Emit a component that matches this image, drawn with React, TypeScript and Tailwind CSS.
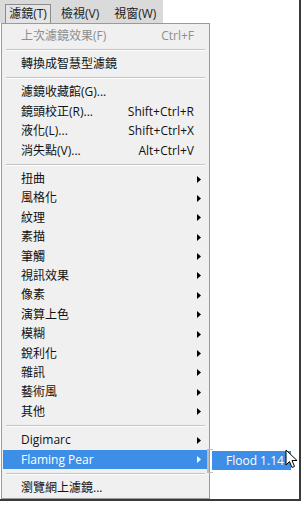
const font = { fontFamily: '"Open Sans", "Noto Sans CJK TC", sans-serif' };

type Item =
  | { kind: "sep" }
  | { kind: "item"; label: string; shortcut?: string; sub?: boolean; disabled?: boolean; active?: boolean };

const items: Item[] = [
  { kind: "item", label: "上次濾鏡效果(F)", shortcut: "Ctrl+F", disabled: true },
  { kind: "sep" },
  { kind: "item", label: "轉換成智慧型濾鏡" },
  { kind: "sep" },
  { kind: "item", label: "濾鏡收藏館(G)..." },
  { kind: "item", label: "鏡頭校正(R)...", shortcut: "Shift+Ctrl+R" },
  { kind: "item", label: "液化(L)...", shortcut: "Shift+Ctrl+X" },
  { kind: "item", label: "消失點(V)...", shortcut: "Alt+Ctrl+V" },
  { kind: "sep" },
  { kind: "item", label: "扭曲", sub: true },
  { kind: "item", label: "風格化", sub: true },
  { kind: "item", label: "紋理", sub: true },
  { kind: "item", label: "素描", sub: true },
  { kind: "item", label: "筆觸", sub: true },
  { kind: "item", label: "視訊效果", sub: true },
  { kind: "item", label: "像素", sub: true },
  { kind: "item", label: "演算上色", sub: true },
  { kind: "item", label: "模糊", sub: true },
  { kind: "item", label: "銳利化", sub: true },
  { kind: "item", label: "雜訊", sub: true },
  { kind: "item", label: "藝術風", sub: true },
  { kind: "item", label: "其他", sub: true },
  { kind: "sep" },
  { kind: "item", label: "Digimarc", sub: true },
  { kind: "item", label: "Flaming Pear", sub: true, active: true },
  { kind: "sep" },
  { kind: "item", label: "瀏覽網上濾鏡..." },
];

const Arrow = ({ white }: { white?: boolean }) => (
  <svg width="4" height="7" viewBox="0 0 4 7" className="shrink-0">
    <path d="M0 0 L4 3.5 L0 7 Z" fill={white ? "#ffffff" : "#000000"} />
  </svg>
);

const Cursor = () => (
  <svg width="13" height="21" viewBox="0 0 13 21" className="absolute left-[285px] top-[449px]">
    <path
      d="M1 1 L1 16 L4.5 12.5 L7 18.5 L9.5 17.5 L7 11.5 L12 11.5 Z"
      fill="#ffffff"
      stroke="#000000"
      strokeWidth="1"
      strokeLinejoin="round"
    />
  </svg>
);

export default function App() {
  return (
    <div className="w-[304px] h-[505px] bg-white relative overflow-hidden" style={font}>
      <div className="w-[301px] h-[501px] border-r-2 border-b-2 border-[#3a3a3a] relative">
        {/* menu bar */}
        <div className="w-[163px] h-[23px] bg-[#dadada] flex items-end pl-[5px] text-[12px] text-[#222] whitespace-nowrap">
          <div className="w-[46px] h-[19px] flex items-center justify-center border border-b-0 border-[#8c8c8c] bg-[#e4e4e4]">
            濾鏡(T)
          </div>
          <div className="h-[19px] ml-[10px] flex items-center">檢視(V)</div>
          <div className="h-[19px] ml-[15px] flex items-center">視窗(W)</div>
        </div>

        {/* dropdown */}
        <div className="ml-[1px] w-[209px] h-[476px] bg-[#f0f0f0] border border-[#9a9a9a] pt-[2px] px-[1px] flex flex-col">
          {items.map((it, i) =>
            it.kind === "sep" ? (
              <div key={i} className="h-[9px] flex items-center px-[3px]">
                <div className="w-full h-[2px] border-t border-[#c4c4c4] border-b border-b-white" />
              </div>
            ) : (
              <div
                key={i}
                className={
                  "h-[19.4px] flex items-center pl-[18px] pr-[7px] text-[12px] " +
                  (it.active ? "bg-[#3d8ee6] text-white" : it.disabled ? "text-[#8e8e8e]" : "text-[#111]")
                }
              >
                <span className="flex-1 whitespace-nowrap">{it.label}</span>
                {it.shortcut && <span className="whitespace-nowrap pr-[7px]">{it.shortcut}</span>}
                {it.sub && <Arrow white={it.active} />}
              </div>
            )
          )}
        </div>

        {/* submenu */}
        <div className="absolute left-[207px] top-[449px] w-[86px] h-[24px] border-l-2 border-[#bdbdbd] p-[2px] pl-[3px]">
          <div className="h-[19px] bg-[#3d8ee6] text-white text-[12px] flex items-center pl-[14px] whitespace-nowrap">
            Flood 1.14
          </div>
          <div className="absolute left-0 top-0 w-[4px] border-t border-[#bdbdbd]" />
          <div className="absolute left-0 bottom-0 w-[4px] border-b border-[#bdbdbd]" />
        </div>
        <Cursor />
      </div>
    </div>
  );
}
